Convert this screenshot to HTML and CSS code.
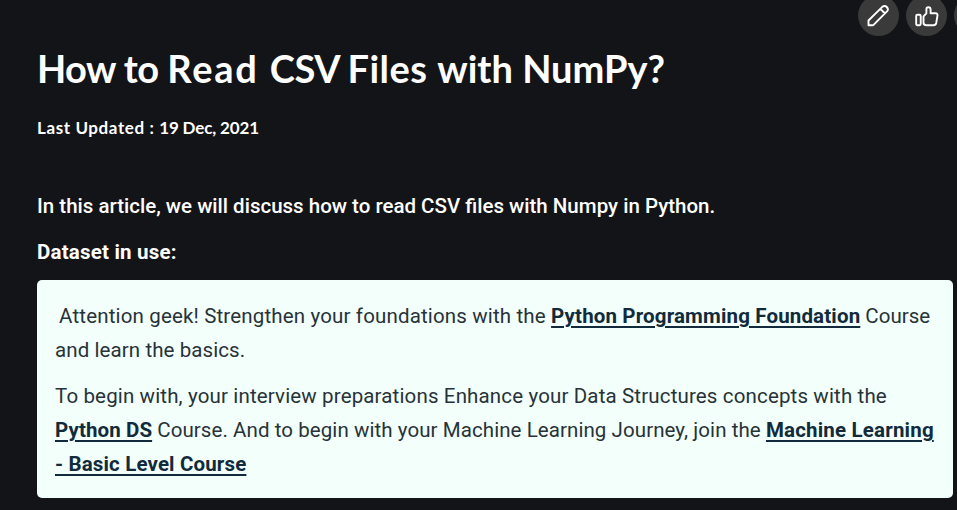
FILE: index.html
```
<!DOCTYPE html>
<html lang="en">
<head>
<meta charset="utf-8">
<title>How to Read CSV Files with NumPy?</title>
<link rel="stylesheet" href="styles.css">
</head>
<body>
<nav class="actions">
  <button class="action" aria-label="Edit"><svg width="24" height="24" viewBox="0 0 24 24"><path d="M1.5 21.2V16.5L15.3 2.8Q17.8 1 19.8 3Q21.8 5.2 20.2 7.2L6.3 21.2ZM13.5 5L18 9.5"/></svg></button>
  <button class="action" aria-label="Like"><svg width="24" height="24" viewBox="0 0 24 24"><rect x="1.2" y="10.8" width="4.5" height="10.4" rx="1.2"/><path d="M8.5 12.4L11.4 9.3V5Q11.4 3.2 13.3 3.2Q15.6 3.2 15.6 5.6V9.3H20.7Q22.6 9.3 22.5 11.3L21.3 18.7Q20.8 21.2 18.5 21.2H11.5Q8.5 21.2 8.5 18.8Z"/></svg></button>
  <button class="action" aria-label="More"></button>
</nav>
<main class="article">
  <h1 class="title"><span class="how">How to </span><span class="read">Read </span><span class="csv">CSV </span><span class="files">Files </span>with NumPy?</h1>
  <p class="updated"><span class="label">Last Updated : </span><span class="date">19 Dec, 2021</span></p>
  <p class="intro">In this article, we will discuss how to read CSV files with Numpy in Python.</p>
  <p class="dataset">Dataset in use:</p>
  <section class="notice">
    <p class="attention">&nbsp;<span class="lead">Attention geek! Strengthen your foundations with the </span><a class="foundation">Python Programming Foundation</a> Course<br><span class="basics">and learn the basics.</span></p>
    <p><span class="prep">To begin with, your interview preparations Enhance your Data Structures concepts with the</span><br><a class="ds">Python DS</a><span class="journey"> Course. And to begin with your Machine Learning Journey, join the </span><a class="ml">Machine Learning</a><br><a class="level">- Basic Level Course</a></p>
  </section>
</main>
</body>
</html>
```
FILE: styles.css
```
body {
  margin: 0;
  height: 510px;
  overflow: hidden;
  position: relative;
  background: #131417;
  color: #fff;
  font-family: Roboto, sans-serif;
}
p, h1 { margin: 0; white-space: nowrap; }
.actions {
  position: absolute;
  top: -5px;
  left: 858px;
  display: flex;
  gap: 7px;
}
.action {
  flex: none;
  width: 41px;
  height: 41px;
  padding: 0;
  border: 0;
  border-radius: 50%;
  background: #3a3a3b;
  display: flex;
  align-items: center;
  justify-content: center;
}
.action svg { fill: none; stroke: #fff; stroke-width: 1.9; stroke-linejoin: round; }
.article { padding: 43px 4px 0 37px; }
.title {
  font: 700 38px/50px Lato, sans-serif;
}
.how { letter-spacing: -0.57px; }
.read { letter-spacing: 1.8px; }
.csv { letter-spacing: -0.5px; }
.files { letter-spacing: 0.5px; }
.updated {
  margin-top: 23px;
  font: 700 17px/24px Lato, sans-serif;
}
.label { letter-spacing: 0.6px; }
.date { letter-spacing: -0.15px; }
.intro {
  margin-top: 49px;
  font-size: 20.5px;
  font-weight: 500;
  line-height: 34px;
}
.dataset {
  margin-top: 12px;
  font-size: 20.5px;
  font-weight: 700;
  line-height: 34px;
  letter-spacing: 0.2px;
}
.notice {
  box-sizing: border-box;
  height: 218px;
  margin-top: 11px;
  padding: 19px 18px 17px;
  border-radius: 5px;
  background: #f3fffa;
  color: #273239;
  font-size: 20.5px;
  line-height: 34px;
}
.notice p + p { margin-top: 12px; }
.notice a {
  color: #112b3c;
  font-weight: 700;
  text-decoration: underline;
  text-decoration-thickness: 2px;
  text-underline-offset: 3px;
}
.attention { text-indent: -1px; }
.lead { letter-spacing: 0.155px; }
.notice .foundation { letter-spacing: 0.15px; }
.basics { letter-spacing: 0.09px; }
.prep { letter-spacing: 0.147px; }
.ds { letter-spacing: 0.1px; }
.journey { letter-spacing: 0.075px; }
.ml { letter-spacing: 0.18px; }
.level { letter-spacing: 0.15px; }
```
